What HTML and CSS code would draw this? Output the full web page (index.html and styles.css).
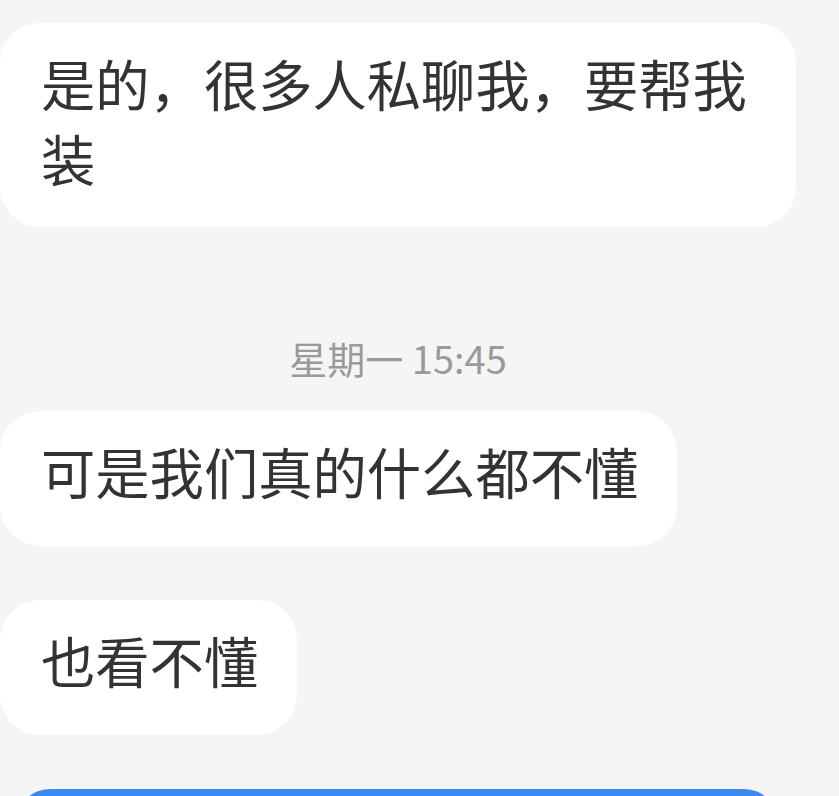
FILE: index.html
```html
<!DOCTYPE html>
<html lang="zh-CN">
<head>
<meta charset="utf-8">
<title>聊天</title>
<link rel="stylesheet" href="styles.css">
</head>
<body>
<main class="chat">
  <div class="row">
    <div class="bubble bubble-multi">是的，很多人私聊我，要帮我装</div>
  </div>
  <div class="time">星期一 15:45</div>
  <div class="row">
    <div class="bubble">可是我们真的什么都不懂</div>
  </div>
  <div class="row">
    <div class="bubble">也看不懂</div>
  </div>
  <div class="bar"></div>
</main>
</body>
</html>
```
FILE: styles.css
```css
html, body {
  margin: 0;
  padding: 0;
  background: #f5f5f5;
  overflow: hidden;
  height: 796px;
}
.chat {
  width: 796px;
  padding-top: 23px;
  display: flex;
  flex-direction: column;
  font-family: "Noto Sans CJK SC", "Noto Sans", sans-serif;
}
.row {
  display: flex;
  margin-bottom: 54px;
}
.bubble {
  background: #ffffff;
  color: #333333;
  font-size: 54.3px;
  line-height: 75px;
  padding: 22px 39px 38px 41px;
  border-radius: 40px;
  max-width: 796px;
  box-sizing: border-box;
  word-break: break-all;
}
.bubble-multi {
  padding-bottom: 32px;
}
.row:first-child {
  margin-bottom: 0;
}
.time {
  text-align: center;
  color: #9a9a9a;
  font-size: 38px;
  line-height: 50px;
  margin: 106px 0 28px;
}
.bar {
  margin: 0 18px 0 16px;
  height: 80px;
  background: #3e89f0;
  border-radius: 34px 34px 0 0;
}
```
